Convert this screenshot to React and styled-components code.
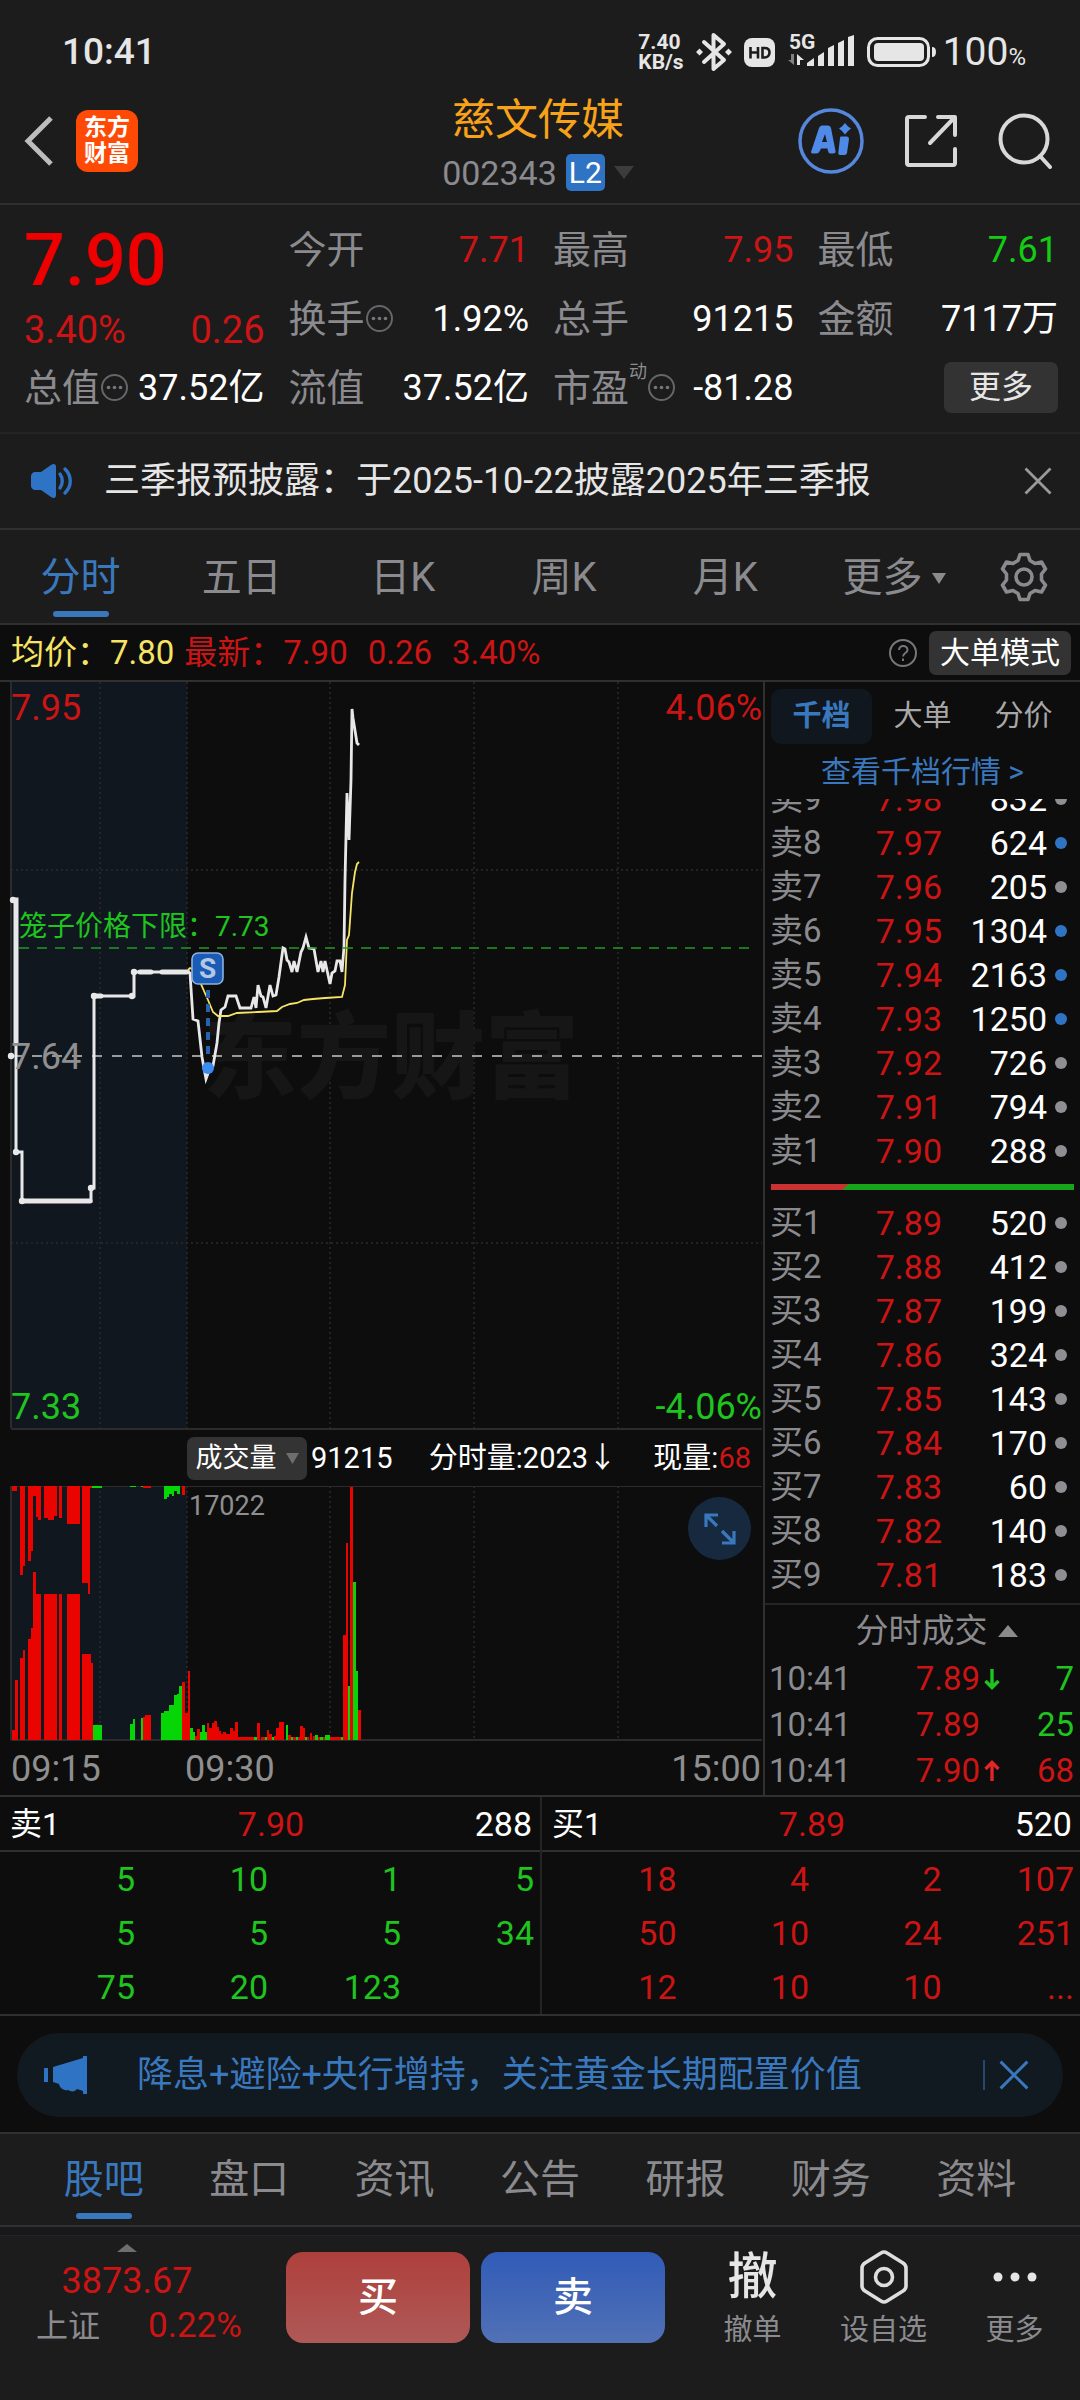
import React from "react";
import styled, { createGlobalStyle, css } from "styled-components";

const c = {
  bg: "#0d0d0d",
  panel: "#1c1c1c",
  line: "#303030",
  faint: "#242424",
  chip: "#333333",
  grey: "#8b8b8f",
  text: "#e6e6e6",
  white: "#ffffff",
  red: "#cc1414",
  hot: "#ee0000",
  green: "#1fc41f",
  blue: "#3a78be",
  navy: "#10171f",
  yellow: "#f7e464",
};

const Global = createGlobalStyle`
  *, *::before, *::after { box-sizing: border-box; }
  body {
    margin: 0;
    background: ${c.panel};
    color: ${c.text};
    font-family: Roboto, "Noto Sans CJK SC", sans-serif;
  }
  button { font: inherit; color: inherit; border: 0; padding: 0; background: none; cursor: pointer; }
  a { color: inherit; text-decoration: none; }
  svg { display: block; }
  table { border-collapse: collapse; table-layout: fixed; width: 100%; }
  td, th { padding: 0; font-weight: 400; text-align: right; }
  h1, p, dl, dt, dd { margin: 0; font-weight: 400; }
`;

const Page = styled.div`
  display: flex;
  flex-direction: column;
  background: ${c.bg};
  white-space: nowrap;
`;

/* ---------- status bar ---------- */
const StatusBar = styled.div`
  display: flex;
  justify-content: space-between;
  align-items: center;
  height: 88px;
  padding: 16px 54px 0 62px;
  background: ${c.panel};
  font-size: 37px;
  line-height: 40px;
  font-weight: 500;
`;
const StatusRight = styled.div`
  display: flex;
  align-items: center;
  gap: 12px;
`;
const Speed = styled.div`
  font-size: 21px;
  line-height: 20px;
  font-weight: 700;
`;
const Battery = styled.div`
  display: flex;
  align-items: center;
  gap: 6px;
  font-size: 39px;
  font-weight: 400;
  small { font-size: 24px; line-height: 20px; }
`;

/* ---------- title ---------- */
const Header = styled.header`
  display: grid;
  grid-template-columns: 1fr auto 1fr;
  align-items: center;
  height: 117px;
  padding: 0 28px 9px 24px;
  background: ${c.panel};
  border-bottom: 2px solid ${c.line};
`;
const HeaderSide = styled.div`
  display: flex;
  align-items: center;
  gap: 22px;
  justify-content: ${(p) => (p.$end ? "flex-end" : "flex-start")};
  ${(p) => p.$end && css`gap: 40px;`}
`;
const Logo = styled.a`
  display: flex;
  flex-direction: column;
  align-items: center;
  justify-content: center;
  width: 62px;
  height: 62px;
  border-radius: 12px;
  background: #ff4a05;
  color: #fff;
  font-size: 23px;
  line-height: 26px;
  font-weight: 700;
`;
const Title = styled.div`
  text-align: center;
  h1 { color: #f8a21a; font-size: 43px; line-height: 63px; }
`;
const Code = styled.div`
  display: flex;
  align-items: center;
  justify-content: center;
  gap: 9px;
  color: ${c.grey};
  font-size: 34px;
  line-height: 42px;
`;
const Level = styled.span`
  padding: 0 3px;
  border-radius: 5px;
  background: #2f74c4;
  color: #fff;
  font-size: 30px;
  line-height: 37px;
`;

/* ---------- quote ---------- */
const Quote = styled.section`
  display: grid;
  grid-template-columns: repeat(4, 1fr);
  grid-auto-rows: 69px;
  column-gap: 24px;
  padding: 10px 22px 10px 24px;
  background: ${c.panel};
  border-bottom: 2px solid ${c.faint};
`;
const Last = styled.div`
  grid-row: span 2;
  display: flex;
  flex-direction: column;
  gap: 14px;
  padding-top: 14px;
  color: ${c.red};
`;
const LastPrice = styled.strong`
  color: ${c.hot};
  font-size: 72px;
  line-height: 64px;
  font-weight: 500;
`;
const LastChange = styled.div`
  display: flex;
  justify-content: space-between;
  font-size: 38px;
  line-height: 46px;
`;
const Stat = styled.dl`
  display: flex;
  align-items: center;
  justify-content: space-between;
  line-height: 46px;
  dt {
    display: flex;
    align-items: center;
    color: ${c.grey};
    font-size: 38px;
  }
  dd {
    color: ${(p) => p.$tone || c.white};
    font-size: 36px;
  }
  sup { align-self: flex-start; font-size: 18px; line-height: 14px; }
`;
const MoreCell = styled.div`
  display: flex;
  align-items: center;
  justify-content: flex-end;
`;
const Chip = styled.button`
  padding: 0 ${(p) => p.$pad || 11}px;
  border-radius: 7px;
  background: ${c.chip};
  color: ${c.white};
  font-size: ${(p) => p.$size || 30}px;
  line-height: ${(p) => p.$line || 44}px;
`;
const MoreChip = styled(Chip)`
  width: 114px;
  color: ${c.text};
`;

/* ---------- notice ---------- */
const Notice = styled.section`
  display: flex;
  align-items: center;
  height: 96px;
  padding: 0 28px 0 30px;
  background: ${c.panel};
  border-bottom: 2px solid ${c.line};
  p { flex: 1; padding-left: 30px; font-size: 36px; line-height: 46px; }
`;

/* ---------- tabs ---------- */
const Tabs = styled.nav`
  display: grid;
  grid-template-columns: ${(p) => p.$cols};
  height: 95px;
  padding: 0 ${(p) => p.$pad || 0}px;
  background: ${c.panel};
  border-bottom: 2px solid ${c.line};
  ${(p) => p.$topLine && css`border-top: 2px solid ${c.line};`}
`;
const Tab = styled.button`
  display: flex;
  flex-direction: column;
  align-items: center;
  justify-content: flex-end;
  gap: 9px;
  padding-bottom: 6px;
  color: ${(p) => (p.$on ? c.blue : c.grey)};
  font-size: 40px;
  line-height: 48px;
  &::after {
    content: "";
    width: 56px;
    height: 6px;
    border-radius: 3px;
    background: ${(p) => (p.$on ? c.blue : "transparent")};
  }
`;
const TabLabel = styled.span`
  display: flex;
  align-items: center;
  gap: 10px;
  padding-left: 16px;
`;
const IconButton = styled.button`
  display: flex;
  align-items: center;
  justify-content: center;
`;

/* ---------- info line ---------- */
const InfoLine = styled.div`
  display: flex;
  align-items: center;
  height: 57px;
  padding: 0 9px 0 11px;
  border-bottom: 2px solid ${c.line};
  font-size: 33px;
  line-height: 44px;
  color: ${c.red};
`;
const InfoText = styled.span`
  color: ${(p) => p.$tone || c.red};
  margin-right: ${(p) => p.$gap || 20}px;
`;
const InfoEnd = styled.div`
  display: flex;
  align-items: center;
  gap: 11px;
  margin-left: auto;
`;

/* ---------- body ---------- */
const Body = styled.main`
  display: grid;
  grid-template-columns: 763fr 317fr;
  border-bottom: 2px solid ${c.line};
`;
const ChartColumn = styled.section`
  display: flex;
  flex-direction: column;
  min-width: 0;
`;
const PlotBox = styled.div`
  position: relative;
  svg { width: 100%; height: auto; }
`;
const PlotLabel = styled.span`
  position: absolute;
  ${(p) => p.$at};
  color: ${(p) => p.$tone};
  font-size: ${(p) => p.$size || 36}px;
  line-height: 40px;
`;
const VolumeHead = styled.div`
  display: flex;
  align-items: center;
  justify-content: space-between;
  height: 56px;
  padding: 0 12px 0 187px;
  color: ${c.white};
  font-size: 29px;
  line-height: 42px;
`;
const VolumePick = styled.div`
  display: flex;
  align-items: center;
  gap: 4px;
`;
const PickChip = styled(Chip)`
  display: flex;
  align-items: center;
  gap: 9px;
  width: 120px;
  justify-content: center;
`;
const RedText = styled.span`
  color: ${c.red};
`;
const Expand = styled.button`
  position: absolute;
  top: 11px;
  right: 12px;
  display: flex;
  align-items: center;
  justify-content: center;
  width: 63px;
  height: 63px;
  border-radius: 50%;
  background: #16293f;
  svg { width: 36px; height: 36px; }
`;
const Axis = styled.div`
  display: grid;
  grid-template-columns: 174px 1fr auto;
  padding: 5px 2px 4px 11px;
  color: #8f8f8f;
  font-size: 36px;
  line-height: 44px;
`;

/* ---------- order book ---------- */
const Book = styled.aside`
  display: flex;
  flex-direction: column;
  min-width: 0;
  padding-top: 7px;
  border-left: 2px solid ${c.line};
`;
const BookTabs = styled.div`
  display: grid;
  grid-template-columns: repeat(3, 1fr);
  padding: 0 6px;
`;
const BookTab = styled.button`
  border-radius: 10px;
  background: ${(p) => (p.$on ? "#10171f" : "transparent")};
  color: ${(p) => (p.$on ? c.blue : "#a8a8a8")};
  font-size: 29px;
  line-height: 55px;
  font-weight: ${(p) => (p.$on ? 700 : 400)};
`;
const BookLink = styled.a`
  display: block;
  padding: 6px 0 5px;
  text-align: center;
  color: ${c.blue};
  font-size: 30px;
  line-height: 44px;
`;
const Clip = styled.div`
  display: flex;
  flex-direction: column;
  justify-content: flex-end;
  height: 374px;
  overflow: hidden;
`;
const Levels = styled.table`
  flex: none;
  color: ${c.white};
  font-size: 34px;
  line-height: 44px;
  tr { height: 44px; }
  th { width: 76px; padding-left: 5px; text-align: left; color: ${c.grey}; font-size: 33px; }
  td:nth-child(2) { width: 101px; color: ${c.red}; }
  td:nth-child(4) { width: 33px; }
`;
const Dot = styled.i`
  display: block;
  width: 12px;
  height: 12px;
  margin-left: 8px;
  border-radius: 50%;
  background: ${(p) => (p.$on ? "#2f74c4" : "#8e8e93")};
`;
const Balance = styled.div`
  height: 6px;
  margin: 11px 6px;
  background: linear-gradient(135deg, #c83232 0 25%, #18a418 25%);
`;
const DealsTitle = styled.button`
  display: flex;
  align-items: center;
  justify-content: center;
  gap: 10px;
  margin-top: 6px;
  padding: 1px 0 0 28px;
  border-top: 2px solid ${c.faint};
  color: ${c.grey};
  font-size: 33px;
  line-height: 50px;
`;
const Deals = styled.table`
  font-size: 33px;
  line-height: 46px;
  th { width: 120px; padding-left: 4px; text-align: left; color: ${c.grey}; }
  td:nth-child(2) { color: ${c.red}; }
  td:nth-child(3) { width: 24px; padding-left: 4px; }
  td:nth-child(4) { width: 76px; padding-right: 6px; }
`;
const DealAmount = styled.span`
  color: ${(p) => (p.$up ? c.red : c.green)};
`;

/* ---------- queues ---------- */
const Queues = styled.section`
  display: grid;
  grid-template-columns: 1fr 1fr;
  border-bottom: 2px solid ${c.line};
`;
const Queue = styled.div`
  color: ${(p) => p.$tone};
  font-size: 34px;
  line-height: 54px;
  & + & { border-left: 2px solid ${c.faint}; }
  table { width: calc(100% - 8px); margin-left: 8px; }
  td { padding-right: 6px; }
`;
const QueueHead = styled.div`
  display: grid;
  grid-template-columns: 1fr 1fr 1fr;
  height: 55px;
  padding: 0 8px 0 10px;
  border-bottom: 2px solid ${c.line};
  color: ${c.white};
  line-height: 55px;
  span:nth-child(1) { font-size: 32px; }
  span:nth-child(2) { text-align: center; color: ${c.red}; }
  span:nth-child(3) { text-align: right; }
`;

/* ---------- promo ---------- */
const PromoWrap = styled.section`
  padding: 17px 17px 15px;
`;
const Promo = styled.div`
  display: flex;
  align-items: center;
  height: 84px;
  padding: 0 34px 0 27px;
  border-radius: 42px;
  background: #111921;
  color: ${c.blue};
  font-size: 36px;
  a { flex: 1; padding-left: 50px; line-height: 46px; }
`;
const PromoClose = styled.button`
  display: flex;
  padding-left: 14px;
  border-left: 2px solid #24486f;
`;

/* ---------- bottom bar ---------- */
const Gap = styled.div`
  height: 9px;
  background: #18181a;
  border-bottom: 1px solid ${c.faint};
`;
const BottomBar = styled.footer`
  display: grid;
  grid-template-columns: 275fr 184fr 184fr 404fr;
  column-gap: 11px;
  align-items: start;
  padding: 8px 0 56px;
  background: ${c.panel};
`;
const IndexBox = styled.button`
  display: flex;
  flex-direction: column;
  align-items: center;
  padding-right: 21px;
  color: ${c.red};
  font-size: 36px;
  line-height: 46px;
  svg { margin-bottom: 6px; }
`;
const IndexRow = styled.span`
  display: flex;
  justify-content: center;
  gap: 48px;
  padding-left: 24px;
  font-size: 35px;
  line-height: 44px;
  span { color: ${c.grey}; font-size: 32px; }
`;
const Trade = styled.button`
  margin-top: 8px;
  border-radius: 17px;
  background: ${(p) =>
    p.$buy
      ? "linear-gradient(#ae403c, #af5957)"
      : "linear-gradient(#305bb7, #5271b6)"};
  color: #fff;
  font-size: 40px;
  line-height: 91px;
  font-weight: 500;
`;
const Tools = styled.div`
  display: grid;
  grid-template-columns: repeat(3, 1fr);
  padding: 4px 0 0 11px;
`;
const Tool = styled.button`
  display: flex;
  flex-direction: column;
  align-items: center;
  color: ${c.grey};
  font-size: 29px;
  line-height: 48px;
`;
const ToolIcon = styled.span`
  display: flex;
  align-items: center;
  height: 58px;
  color: ${c.text};
  font-size: 50px;
  line-height: 58px;
  font-weight: 500;
`;

/* ---------- drawings ---------- */
const Tri = ({ w, h, color, up }) => (
  <svg width={w} height={h} viewBox="0 0 10 10" preserveAspectRatio="none" aria-hidden="true">
    <path d={up ? "M0 10L5 0L10 10Z" : "M0 0H10L5 10Z"} fill={color} />
  </svg>
);
const Cross = ({ size, color }) => (
  <svg width={size} height={size} viewBox="0 0 28 28" aria-hidden="true">
    <path d="M1.500 1.500L26.500 26.500M26.500 1.500L1.500 26.500" stroke={color} strokeWidth="2.800" />
  </svg>
);
const Hint = () => (
  <svg width="29" height="29" viewBox="0 0 29 29" aria-hidden="true">
    <circle cx="14.500" cy="14.500" r="12.500" fill="none" stroke="#66666a" strokeWidth="2" />
    <g fill="#77777b"><circle cx="8.500" cy="14.500" r="1.800" /><circle cx="14.500" cy="14.500" r="1.800" /><circle cx="20.500" cy="14.500" r="1.800" /></g>
  </svg>
);
const Bluetooth = () => (
  <svg width="36" height="40" viewBox="0 0 36 40" fill="none" stroke="#e6e6e6" strokeWidth="4" strokeLinecap="round" aria-hidden="true">
    <path d="M8 10L28 28L17.500 37V3L28 12L8 30" strokeLinejoin="round" />
    <path d="M0 20L3.500 16.500L7 20L3.500 23.500ZM29 20L32.500 16.500L36 20L32.500 23.500Z" fill="#e6e6e6" stroke="none" />
  </svg>
);
const Hd = () => (
  <svg width="31" height="31" viewBox="0 0 31 31" aria-hidden="true">
    <rect y="1" width="31" height="29" rx="8" fill="#e6e6e6" />
    <path d="M6.500 10V21.500M14 10V21.500M6.500 15.500H14M18.500 11V20.500H20.500C23.500 20.500 25.500 18.500 25.500 15.500S23.500 11 20.500 11Z" fill="none" stroke="#1c1c1c" strokeWidth="2.600" />
  </svg>
);
const Signal = () => (
  <svg width="68" height="40" viewBox="0 0 68 40" fill="#e6e6e6" aria-hidden="true">
    <text x="2" y="17" fontSize="21" fontWeight="700" fontFamily="Roboto">5G</text>
    <path d="M4 22H7V33L1 28H4Z" opacity="0.500" />
    <path d="M10 33V22L17 28H13V33Z" />
    <path d="M20 31L27 26V34H20ZM31 24L37 20V34H31ZM41 16L47 13V34H41ZM51 11L57 8V34H51ZM61 5L67 3V34H61Z" />
  </svg>
);
const BatteryIcon = () => (
  <svg width="70" height="30" viewBox="0 0 70 30" aria-hidden="true">
    <rect x="1.500" y="1.500" width="60" height="27" rx="9" fill="none" stroke="#e6e6e6" strokeWidth="3" />
    <rect x="7" y="6" width="50" height="18" rx="4" fill="#e6e6e6" />
    <path d="M65 10Q69 10 69 15Q69 20 65 20Z" fill="#e6e6e6" />
  </svg>
);
const BackIcon = () => (
  <svg width="30" height="52" viewBox="0 0 30 52" aria-hidden="true">
    <path d="M27 3L4 26L27 49" fill="none" stroke="#bdbdbd" strokeWidth="5" />
  </svg>
);
const AiIcon = () => (
  <svg width="66" height="66" viewBox="0 0 66 66" fill="#4f8ae8" aria-hidden="true">
    <circle cx="33" cy="33" r="31" fill="none" stroke="#5588dc" strokeWidth="3.500" />
    <path fillRule="evenodd" d="M24 17.500H30Q32.500 17.500 33 20L37.500 43Q38 45.500 35 45.500H32.500Q30.500 45.500 30 43L29.500 40.500H23L21.500 43.500Q20.500 45.500 18.500 45.500H15Q12 45.500 13.500 42.500L21 20Q22 17.500 24 17.500ZM27 26L24 34H29Z" />
    <path d="M42.500 28.500H49Q51 28.500 51 31L49 45Q48.500 47 46.500 47H42Q40 47 40.300 45L42 30Z" />
    <path d="M47 15L50 18.500L53 20.500L50 23L47 26.500L44 23L41 20.500L44 18.500Z" />
  </svg>
);
const ShareIcon = () => (
  <svg width="54" height="54" viewBox="0 0 54 54" fill="none" stroke="#d8d8d8" strokeWidth="4" strokeLinejoin="round" strokeLinecap="round" aria-hidden="true">
    <path d="M21 3H5Q3 3 3 5V49Q3 51 5 51H49Q51 51 51 49V35M34 3H51V21M50 4L26 29" />
  </svg>
);
const SearchIcon = () => (
  <svg width="54" height="56" viewBox="0 0 54 56" fill="none" stroke="#d8d8d8" strokeWidth="4" strokeLinecap="round" aria-hidden="true">
    <circle cx="26" cy="26" r="23.500" /><path d="M42 43L52 54" />
  </svg>
);
const Speaker = () => (
  <svg width="44" height="36" viewBox="0 0 44 36" aria-hidden="true">
    <path d="M5 9H11L21 2C24 0 26 1 26 4V32C26 35 24 36 21 34L11 27H5C3 27 1 25 1 23V13C1 11 3 9 5 9Z" fill="#2f74c4" />
    <path d="M30 11C33 15 33 21 30 25M35 6C42 13 42 23 35 30" fill="none" stroke="#2f74c4" strokeWidth="3.400" strokeLinecap="round" />
  </svg>
);
const Gear = () => (
  <svg width="50" height="50" viewBox="0 0 50 50" fill="none" stroke="#8b8b8f" strokeWidth="3.600" strokeLinejoin="round" aria-hidden="true">
    <path d="M21 2.500H29L31 8.500L36 11.500L42.500 10L46.500 17L42.500 22V28L46.500 33L42.500 40L36 38.500L31 41.500L29 47.500H21L19 41.500L14 38.500L7.500 40L3.500 33L7.500 28V22L3.500 17L7.500 10L14 11.500L19 8.500Z" />
    <circle cx="25" cy="25" r="8" />
  </svg>
);
const Question = () => (
  <svg width="30" height="30" viewBox="0 0 30 30" fill="none" stroke="#77777b" strokeWidth="2" aria-hidden="true">
    <circle cx="15" cy="15" r="13" />
    <path d="M11 12C11 6.500 19.500 7 19.500 12C19.500 15 15 15 15 18.500M15 20.500V23" />
  </svg>
);
const ExpandIcon = () => (
  <svg viewBox="0 0 36 36" fill="none" stroke="#3a78be" strokeWidth="3.200" aria-hidden="true">
    <path d="M4 16V4H16M4 4L15 15M32 20V32H20M32 32L20 20" />
  </svg>
);
const Arrow = ({ up }) => (
  <svg width="16" height="22" viewBox="0 0 16 22" fill="none" stroke={up ? "#e02626" : "#1fc41f"} strokeWidth="3.400" aria-hidden="true">
    <path d={up ? "M8 21V3M1.500 9L8 2.500L14.500 9" : "M8 1V19M1.500 13L8 19.500L14.500 13"} />
  </svg>
);
const Megaphone = () => (
  <svg width="43" height="38" viewBox="0 0 43 38" fill="#2f74c4" aria-hidden="true">
    <path d="M0 12H4V26H0ZM9 11L39 2V0H43V38H39V35L33 33C31 36 27 36 24 34C21 35 16 33 15 28L9 26Z" />
  </svg>
);
const Hexagon = () => (
  <svg width="48" height="54" viewBox="0 0 48 54" fill="none" stroke="#dedede" strokeWidth="3.600" strokeLinejoin="round" aria-hidden="true">
    <path d="M21 3Q24 1 27 3L43 13Q46 15 46 18V36Q46 39 43 41L27 51Q24 53 21 51L5 41Q2 39 2 36V18Q2 15 5 13Z" />
    <circle cx="24" cy="27" r="8.500" />
  </svg>
);
const Dots = () => (
  <svg width="44" height="10" viewBox="0 0 44 10" fill="#e6e6e6" aria-hidden="true">
    <circle cx="5" cy="5" r="4.500" /><circle cx="22" cy="5" r="4.500" /><circle cx="39" cy="5" r="4.500" />
  </svg>
);

const priceLine =
  "187,289 190,290 193,336 198,338 202,374 206,396 210,385 213,383 217,360 219,340 221,327 225,324 228,313 236,313 240,325 251,325 254,314 256,325 258,302 261,313 263,314 266,325 270,302 273,313 276,312 279,294 283,265 285,266 287,277 289,279 292,289 294,278 297,289 301,269 303,265 306,254 309,265 314,266 318,289 321,278 323,289 325,278 330,301 332,290 335,288 337,278 340,278 342,289 344,264 345,197 347,110 349,157 351,97 352,26 353,35 357,60 359,62";
const averageLine =
  "188,287 190,285 192,286 195,290 200,299 208,317 213,329 218,333 228,333 237,330 258,329 277,328 282,324 290,321 297,320 304,317 313,316 325,315 342,314 345,302 347,257 349,252 352,210 355,189 357,181 359,179";
const grid = [100, 187, 330, 474, 618];

const PriceChart = () => (
  <svg viewBox="0 0 763 748" role="img" aria-label="分时走势">
    <rect x="11" y="0" width="176" height="746" fill={c.navy} />
    <g stroke="#2a2b2d" strokeWidth="1.500" strokeDasharray="2 3">
      {grid.map((x) => <path key={x} d={`M${x} 0V746`} />)}
      <path d="M11 188H762M11 561H762" />
    </g>
    <text x="203" y="409" fontSize="94" fontWeight="900" fill="#161616">东方财富</text>
    <path d="M11 0V746" stroke="#2b2b2b" strokeWidth="2" />
    <path d="M11 747H762" stroke="#2b2b2b" strokeWidth="2" />
    <path d="M12 374H762" stroke="#9a9a9a" strokeWidth="2" strokeDasharray="10 10" />
    <g transform="translate(0 1)">
      <g fill="none" stroke="#e8e8e8" strokeWidth="3">
        <path d="M13 217H16V361" strokeWidth="5" />
        <path d="M16 361V469H22V518H91V505H94V313H134V289H190" />
        <path d="M22 518H90M94 313H101M140 289H151M162 289H187" strokeWidth="5" strokeLinecap="round" />
        <polyline points={priceLine} strokeWidth="2.800" />
      </g>
      <g fill="#e8e8e8">
        {[[13, 217], [11, 373], [16, 469], [22, 518], [91, 505], [94, 313], [132, 313], [134, 289]].map(([x, y]) => (
          <circle key={`${x}-${y}`} cx={x} cy={y} r="3.200" />
        ))}
      </g>
      <polyline points={averageLine} fill="none" stroke={c.yellow} strokeWidth="1.800" />
      <path d="M19 265H752" stroke="#229a22" strokeWidth="1.600" strokeDasharray="10 8" />
      <path d="M208 307V376" stroke="#2762ae" strokeWidth="4" strokeDasharray="8 6" />
      <circle cx="208" cy="385" r="6" fill="#3c8cf0" />
      <rect x="192" y="270" width="31" height="31" rx="6" fill="#1a5bb5" stroke="#8db0dc" strokeWidth="1.600" />
      <text x="207.500" y="295" fontSize="28" fontWeight="700" fill="#b4c8e4" textAnchor="middle">S</text>
    </g>
  </svg>
);

/* Bars are [x, width, height]. */
const topRed = [[12, 5, 5], [20, 3, 89], [23, 2, 80], [28, 3, 75], [31, 2, 65], [33, 3, 10], [36, 2, 31], [38, 3, 34], [44, 4, 32], [48, 6, 34], [54, 3, 30], [59, 3, 32], [67, 13, 38], [82, 6, 97], [88, 2, 108], [90, 2, 2], [143, 8, 2], [182, 3, 9]];
const topGreen = [[92, 10, 2], [130, 6, 1], [141, 2, 1], [164, 3, 13], [167, 2, 11], [169, 3, 8], [172, 2, 10], [174, 3, 5], [177, 3, 8]];
const lowRed = [[12, 3, 10], [15, 3, 60], [20, 3, 82], [23, 2, 90], [28, 3, 101], [31, 2, 112], [33, 3, 168], [36, 5, 146], [44, 13, 146], [59, 3, 146], [67, 13, 146], [82, 9, 86], [91, 2, 77], [143, 2, 23], [145, 6, 25], [182, 3, 58], [185, 3, 27], [188, 2, 69], [195, 2, 4], [197, 3, 11], [207, 2, 17], [209, 3, 12], [212, 2, 17], [214, 3, 19], [217, 2, 13], [219, 2, 9], [221, 9, 6], [223, 3, 8], [230, 3, 12], [233, 2, 9], [235, 3, 18], [238, 16, 3], [257, 3, 17], [261, 4, 3], [267, 2, 10], [269, 3, 6], [274, 2, 4], [276, 3, 12], [279, 5, 18], [288, 3, 5], [293, 3, 3], [298, 2, 3], [300, 3, 14], [303, 2, 12], [307, 2, 3], [310, 2, 7], [313, 2, 4], [318, 2, 3], [323, 2, 3], [330, 11, 3], [343, 3, 105], [346, 2, 197], [350, 3, 253], [358, 3, 30]];
const lowGreen = [[93, 9, 15], [130, 3, 16], [133, 2, 21], [141, 2, 22], [161, 3, 27], [164, 5, 29], [169, 5, 35], [174, 3, 45], [177, 2, 46], [179, 3, 54], [190, 3, 12], [193, 2, 8], [200, 2, 8], [202, 3, 15], [205, 2, 8], [254, 3, 3], [265, 2, 3], [272, 2, 3], [286, 2, 15], [291, 2, 3], [296, 2, 3], [305, 2, 3], [315, 3, 5], [320, 3, 3], [325, 5, 5], [341, 2, 3], [348, 2, 54], [353, 3, 158], [356, 2, 69]];

const VolumeChart = () => (
  <svg viewBox="0 0 763 256" role="img" aria-label="成交量">
    <rect x="11" y="0" width="176" height="254" fill={c.navy} />
    <path d="M11 0.500H762" stroke="#2b2b2b" />
    <g stroke="#2a2b2d" strokeWidth="1.500" strokeDasharray="2 3">
      {grid.map((x) => <path key={x} d={`M${x} 0V254`} />)}
    </g>
    <path d="M11 0V254M11 254H762" stroke="#2b2b2b" strokeWidth="2" />
    {[[topRed, "#ea0400", true], [topGreen, "#06d606", true], [lowRed, "#ea0400", false], [lowGreen, "#06d606", false]].map(([bars, fill, top], i) => (
      <g key={i} fill={fill}>
        {bars.map(([x, w, h]) => <rect key={x} x={x} y={top ? 0 : 254 - h} width={w} height={h} />)}
      </g>
    ))}
  </svg>
);

const asks = [["卖9", "7.98", "832", 0], ["卖8", "7.97", "624", 1], ["卖7", "7.96", "205", 0], ["卖6", "7.95", "1304", 1], ["卖5", "7.94", "2163", 1], ["卖4", "7.93", "1250", 1], ["卖3", "7.92", "726", 0], ["卖2", "7.91", "794", 0], ["卖1", "7.90", "288", 0]];
const bids = [["买1", "7.89", "520", 0], ["买2", "7.88", "412", 0], ["买3", "7.87", "199", 0], ["买4", "7.86", "324", 0], ["买5", "7.85", "143", 0], ["买6", "7.84", "170", 0], ["买7", "7.83", "60", 0], ["买8", "7.82", "140", 0], ["买9", "7.81", "183", 0]];

const LevelTable = ({ rows }) => (
  <Levels>
    <tbody>
      {rows.map(([name, price, qty, on]) => (
        <tr key={name}>
          <th scope="row">{name}</th>
          <td>{price}</td>
          <td>{qty}</td>
          <td><Dot $on={on} /></td>
        </tr>
      ))}
    </tbody>
  </Levels>
);

const QueueBox = ({ tone, name, price, total, rows }) => (
  <Queue $tone={tone}>
    <QueueHead><span>{name}</span><span>{price}</span><span>{total}</span></QueueHead>
    <table>
      <tbody>
        {rows.map((r, i) => (
          <tr key={i}>{r.map((v, j) => <td key={j}>{v}</td>)}</tr>
        ))}
      </tbody>
    </table>
  </Queue>
);

const StatItem = ({ label, value, tone, hint, sup }) => (
  <Stat $tone={tone}>
    <dt>{label}{sup && <sup>{sup}</sup>}{hint && <Hint />}</dt>
    <dd>{value}</dd>
  </Stat>
);

export default function App() {
  return (
    <>
      <Global />
      <Page>
        <StatusBar>
          <span>10:41</span>
          <StatusRight>
            <Speed>7.40<br />KB/s</Speed>
            <Bluetooth />
            <Hd />
            <Signal />
            <Battery><BatteryIcon /><span>100<small>%</small></span></Battery>
          </StatusRight>
        </StatusBar>

        <Header>
          <HeaderSide>
            <IconButton aria-label="返回"><BackIcon /></IconButton>
            <Logo href="#"><span>东方</span><span>财富</span></Logo>
          </HeaderSide>
          <Title>
            <h1>慈文传媒</h1>
            <Code>002343<Level>L2</Level><Tri w={20} h={13} color="#3c3c3c" /></Code>
          </Title>
          <HeaderSide $end>
            <IconButton aria-label="智能助手"><AiIcon /></IconButton>
            <IconButton aria-label="分享"><ShareIcon /></IconButton>
            <IconButton aria-label="搜索"><SearchIcon /></IconButton>
          </HeaderSide>
        </Header>

        <Quote>
          <Last>
            <LastPrice>7.90</LastPrice>
            <LastChange><span>3.40%</span><span>0.26</span></LastChange>
          </Last>
          <StatItem label="今开" value="7.71" tone={c.red} />
          <StatItem label="最高" value="7.95" tone={c.red} />
          <StatItem label="最低" value="7.61" tone="#14cc14" />
          <StatItem label="换手" value="1.92%" hint />
          <StatItem label="总手" value="91215" />
          <StatItem label="金额" value="7117万" />
          <StatItem label="总值" value="37.52亿" hint />
          <StatItem label="流值" value="37.52亿" />
          <StatItem label="市盈" value="-81.28" sup="动" hint />
          <MoreCell><MoreChip $size={32} $line={51}>更多</MoreChip></MoreCell>
        </Quote>

        <Notice>
          <Speaker />
          <p>三季报预披露：于2025-10-22披露2025年三季报</p>
          <IconButton aria-label="关闭公告"><Cross size={28} color="#9a9a9a" /></IconButton>
        </Notice>

        <Tabs $cols="repeat(6, 1fr) 113px">
          <Tab $on>分时</Tab>
          <Tab>五日</Tab>
          <Tab>日K</Tab>
          <Tab>周K</Tab>
          <Tab>月K</Tab>
          <Tab><TabLabel>更多<Tri w={14} h={11} color={c.grey} /></TabLabel></Tab>
          <IconButton aria-label="设置"><Gear /></IconButton>
        </Tabs>

        <InfoLine>
          <InfoText $tone={c.yellow} $gap={10}>均价：7.80</InfoText>
          <InfoText>最新：7.90</InfoText>
          <InfoText>0.26</InfoText>
          <InfoText>3.40%</InfoText>
          <InfoEnd>
            <IconButton aria-label="说明"><Question /></IconButton>
            <Chip>大单模式</Chip>
          </InfoEnd>
        </InfoLine>

        <Body>
          <ChartColumn>
            <PlotBox>
              <PriceChart />
              <PlotLabel $at="left: 11px; top: 6px" $tone={c.red}>7.95</PlotLabel>
              <PlotLabel $at="right: 1px; top: 6px" $tone={c.red}>4.06%</PlotLabel>
              <PlotLabel $at="left: 19px; top: 225px" $tone={c.green} $size={28}>笼子价格下限：7.73</PlotLabel>
              <PlotLabel $at="left: 11px; top: 355px" $tone="#8f8f8f">7.64</PlotLabel>
              <PlotLabel $at="left: 11px; bottom: 3px" $tone={c.green}>7.33</PlotLabel>
              <PlotLabel $at="right: 1px; bottom: 3px" $tone={c.green}>-4.06%</PlotLabel>
            </PlotBox>
            <VolumeHead>
              <VolumePick>
                <PickChip $size={27} $line={43} $pad={8}>成交量<Tri w={13} h={11} color="#6e6e6e" /></PickChip>
                <span>91215</span>
              </VolumePick>
              <span>分时量:2023↓</span>
              <span>现量:<RedText>68</RedText></span>
            </VolumeHead>
            <PlotBox>
              <VolumeChart />
              <PlotLabel $at="left: 189px; top: 0" $tone="#8f8f8f" $size={27}>17022</PlotLabel>
              <Expand aria-label="全屏"><ExpandIcon /></Expand>
            </PlotBox>
            <Axis><span>09:15</span><span>09:30</span><span>15:00</span></Axis>
          </ChartColumn>

          <Book>
            <BookTabs>
              <BookTab $on>千档</BookTab>
              <BookTab>大单</BookTab>
              <BookTab>分价</BookTab>
            </BookTabs>
            <BookLink href="#">查看千档行情 &gt;</BookLink>
            <Clip><LevelTable rows={asks} /></Clip>
            <Balance />
            <LevelTable rows={bids} />
            <DealsTitle>分时成交<Tri w={20} h={12} color={c.grey} up /></DealsTitle>
            <Deals>
              <tbody>
                <tr><th scope="row">10:41</th><td>7.89</td><td><Arrow /></td><td><DealAmount>7</DealAmount></td></tr>
                <tr><th scope="row">10:41</th><td>7.89</td><td /><td><DealAmount>25</DealAmount></td></tr>
                <tr><th scope="row">10:41</th><td>7.90</td><td><Arrow up /></td><td><DealAmount $up>68</DealAmount></td></tr>
              </tbody>
            </Deals>
          </Book>
        </Body>

        <Queues>
          <QueueBox tone={c.green} name="卖1" price="7.90" total="288" rows={[["5", "10", "1", "5"], ["5", "5", "5", "34"], ["75", "20", "123", ""]]} />
          <QueueBox tone={c.red} name="买1" price="7.89" total="520" rows={[["18", "4", "2", "107"], ["50", "10", "24", "251"], ["12", "10", "10", "..."]]} />
        </Queues>

        <PromoWrap>
          <Promo>
            <Megaphone />
            <a href="#">降息+避险+央行增持，关注黄金长期配置价值</a>
            <PromoClose aria-label="关闭推广"><Cross size={30} color={c.blue} /></PromoClose>
          </Promo>
        </PromoWrap>

        <Tabs $cols="repeat(7, 1fr)" $pad={31} $topLine>
          {["股吧", "盘口", "资讯", "公告", "研报", "财务", "资料"].map((t, i) => (
            <Tab key={t} $on={i === 0}>{t}</Tab>
          ))}
        </Tabs>
        <Gap />
        <BottomBar>
          <IndexBox>
            <Tri w={20} h={8} color="#6e6e6e" up />
            <span>3873.67</span>
            <IndexRow><span>上证</span>0.22%</IndexRow>
          </IndexBox>
          <Trade $buy>买</Trade>
          <Trade>卖</Trade>
          <Tools>
            <Tool><ToolIcon>撤</ToolIcon>撤单</Tool>
            <Tool><ToolIcon><Hexagon /></ToolIcon>设自选</Tool>
            <Tool><ToolIcon><Dots /></ToolIcon>更多</Tool>
          </Tools>
        </BottomBar>
      </Page>
    </>
  );
}
